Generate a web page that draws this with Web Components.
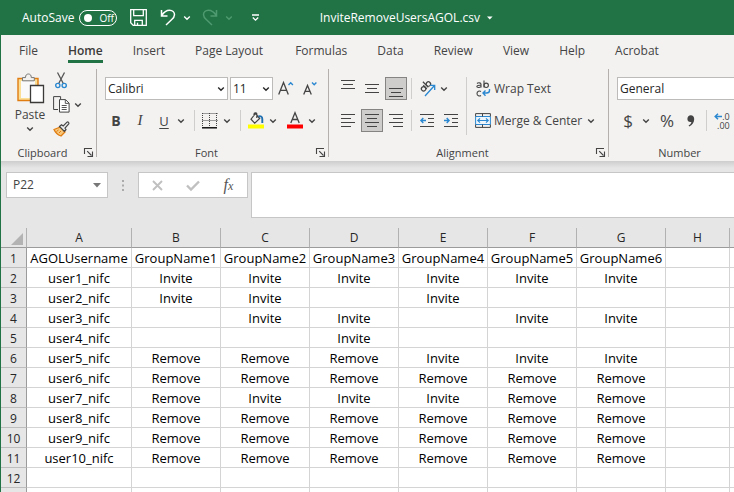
<!DOCTYPE html>
<html lang="en">
<head>
<meta charset="utf-8">
<title>InviteRemoveUsersAGOL.csv</title>
<style>
  html, body { height: 100%; }
  body {
    margin: 0; overflow: hidden; background: #e6e6e6; color: #444;
    font: 12px/16px "Open Sans", "Noto Sans", sans-serif;
  }
</style>
</head>
<body>
<xl-app></xl-app>
<script>
const ICONS = {
  chevron: [8, 6, '<path d="M1.2 1.5 4 4.2 6.8 1.5" stroke-width="1.4"/>'],
  caret: [8, 5, '<path d="M0 0h8L4 4.5z" fill="currentColor" stroke="none"/>'],
  smallcaret: [6, 4, '<path d="M0 .5h5.6L2.8 3.5z" fill="currentColor" stroke="none"/>'],
  save: [17, 17, '<path d="M.7.7h15.6v15.6H3.2L.7 13.8zM3.7.7v6h9.6v-6M4.7 16.3v-5h7.600v5M7.500 16.300v-2.500" stroke-width="1.3"/>'],
  undo: [16, 17, '<path d="M1.500 1v6h6M1.800 6.500C4 3 6.500 1.300 9.500 1.300c3 0 5 2 5 4.500 0 2-1 3.300-3 5L6 16" stroke-width="1.5"/>'],
  redo: [16, 17, '<path d="M14.500 1v6h-6M14.200 6.500C12 3 9.500 1.300 6.500 1.300c-3 0-5 2-5 4.500 0 2 1 3.300 3 5L10 16" stroke-width="1.5"/>'],
  customize: [9, 8, '<path d="M1 1h7M1.800 3.500 4.500 6.200 7.200 3.500" stroke-width="1.3"/>'],
  paste: [29, 31, '<path d="M2 5.500h20v22H2z" fill="#fbdf97" stroke="#e07c10" stroke-width="1.400"/><path d="M5 8h14v17H5z" fill="#fafafa" stroke="none"/><path d="M6.500 7.800V4.600h3C9.500 2 10.800 1 12.400 1s2.900 1 2.900 3.600h3v3.200z" fill="#f3f2f1" stroke="#777"/><path d="M14.500 12.500h13v17h-13z" fill="#fff" stroke="#3b3a39" stroke-width="1.300"/>'],
  cut: [12, 17, '<path d="M2.500.5 8.300 11.500M9.500.5 3.700 11.500" stroke="#555" stroke-width="1.300"/><circle cx="2.800" cy="13.500" r="2.100" stroke="#2b88d0" stroke-width="1.400"/><circle cx="9.200" cy="13.500" r="2.100" stroke="#2b88d0" stroke-width="1.400"/>'],
  copy: [17, 17, '<path d="M5 13.500H.6V.6h7v2.500" /><path d="M6.500 3.600h6l3.600 3.600v8.900H6.500z" fill="#fff"/><path d="M12.300 3.800v3.600h3.600M8.700 9.500h5M8.700 11.500h5M8.700 13.500h5" stroke-width=".9"/>'],
  brush: [17, 16, '<path d="M1 8.500 7.500 6l4.500 5-4 4C5 14 2.500 12 1 8.500z" fill="#f8c67a" stroke="#e07c10" stroke-width="1.300"/><path d="m6 12 2-2M3.500 10.500 5.500 9" stroke="#e07c10"/><path d="m6.500 5.500 2-1.700L10.200 5 14 1.200c1-.8 2.500.6 1.700 1.700L12 7l1 1.700-1.600 1.700z" fill="#eee" stroke="#444" stroke-width="1.200"/>'],
  launcher: [9, 9, '<path d="M.5 6V.5H8M3.200 3.200 7.500 7.500M8.500 3.500v5h-5" stroke-width="1.100"/>'],
  border: [16, 16, '<path d="M.5.5h15M.5 7.500h15M.5 0v14M7.500 0v14M14.500 0v14" stroke-dasharray="1 1"/><path d="M0 14.800h15" stroke="#000" stroke-width="1.400"/>'],
  fill: [17, 17, '<path d="M7.500 1.500 3 7.200l3.700 4 5-4.700zM6 4V2.200C6 .8 8.700.2 8.800 2v4" stroke-width="1.200"/><path d="M10.500 4.500c2-.8 3.800 0 3.800 2.500v4" stroke="#1e6fb0" stroke-width="1.900"/><path d="M0 12.500h16v4H0z" fill="#ff0" stroke="none"/>'],
  fontcolor: [16, 17, '<path d="M3.800 11 8 .8 12.200 11M5.300 7.500h5.400" stroke-width="1.300"/><path d="M0 12.500h16v4H0z" fill="red" stroke="none"/>'],
  grow: [16, 15, '<path d="M.7 13.500 5.500 1.500l4.800 12M2.300 9.300h6.400" stroke-width="1.300"/><path d="m10.500 4 2.200-2.200L14.900 4" stroke="#2b88d0" stroke-width="1.400"/>'],
  shrink: [15, 15, '<path d="M.7 13.500 4.500 4.500l3.800 9M2 10.300h5" stroke-width="1.300"/><path d="m9 1.500 2.200 2.200 2.200-2.200" stroke="#2b88d0" stroke-width="1.400"/>'],
  top: [14, 17, '<path d="M0 .5h14M2 4.500h10M0 8.500h14"/>'],
  middle: [14, 17, '<path d="M0 4.500h14M2 8.500h10M0 12.500h14"/>'],
  bottom: [14, 17, '<path d="M0 8.500h14M2 12.500h10M0 16.500h14"/>'],
  left: [14, 13, '<path d="M0 .5h14M0 4.500h10M0 8.500h14M0 12.500h10"/>'],
  center: [14, 13, '<path d="M0 .5h14M2 4.500h10M0 8.500h14M2 12.500h10"/>'],
  right: [14, 13, '<path d="M0 .5h14M4 4.500h10M0 8.500h14M4 12.500h10"/>'],
  outdent: [14, 13, '<path d="M0 .5h14M8 4.500h6M8 8.500h6M0 12.500h14"/><path d="M6 6.500H1M3.300 4 .9 6.500 3.300 9" stroke="#2b88d0" stroke-width="1.400"/>'],
  indent: [14, 13, '<path d="M0 .5h14M8 4.500h6M8 8.500h6M0 12.500h14"/><path d="M0 6.500h5M2.700 4l2.400 2.500L2.700 9" stroke="#2b88d0" stroke-width="1.400"/>'],
  orient: [17, 17, '<g transform="rotate(-45 6 6)" stroke-width="1.200"><circle cx="3" cy="7" r="2.200"/><path d="M5.300 4.300v5"/><path d="M7.500 1.500v7.700"/><circle cx="9.800" cy="7" r="2.200"/></g><path d="M6 16 15.500 5.500M11 5.300h4.700V10" stroke="#2b88d0" stroke-width="1.300"/>'],
  wrap: [15, 17, '<g stroke-width="1.100"><path d="M1 3.500c1-1 4-1 4 .7v3.300M5 5.300C2.500 5 .8 5.600.8 6.600S3.800 8 5 6.500M8 .5v7"/><ellipse cx="10.200" cy="5.300" rx="2.200" ry="2.200"/><path d="M5 11.500c-1.500-1-4-.5-4 2s2.500 3 4 2"/></g><path d="M13.500 9v1.500c0 2-1 2.500-3 2.500H7M9.500 10.500 7 13l2.500 2.700" stroke="#2b88d0" stroke-width="1.400"/>'],
  merge: [16, 15, '<path d="M.6 3.500h14.800v8H.6z" stroke="#2b88d0" fill="#eef6fc"/><path d="M.6 3.500V.6h14.800v2.900M.6 11.500v2.900h14.800v-2.900M7.500.6v2.900M7.500 11.500v2.900"/><path d="M3 7.500h10M5 5.300 2.800 7.500 5 9.700M11 5.300l2.200 2.200L11 9.700" stroke="#2b88d0" stroke-width="1.200"/>'],
  comma: [8, 12, '<path d="M3.800.3c2 0 3.400 1.400 3.400 3.700 0 3.600-2 6-5 7.400l-.6-.9c1.600-1 2.600-2.300 2.800-3.600C2 7.400.4 6 .4 3.900.4 1.800 1.900.3 3.800.3z" fill="currentColor" stroke="none"/>'],
  arrow: [8, 7, '<path d="M8 3.500H1.500M4 .8 1.200 3.500 4 6.200" stroke="#2b88d0" stroke-width="1.500"/>'],
  cancel: [11, 11, '<path d="m1 1 9 9M10 1l-9 9" stroke-width="1.900"/>'],
  enter: [14, 11, '<path d="m1 5.500 4 4 8-8" stroke-width="2.400"/>'],
  dots: [2, 11, '<path d="M0 0h2v2H0zM0 4.500h2v2H0zM0 9h2v2H0z" fill="currentColor" stroke="none"/>'],
  corner: [12, 12, '<path d="M12 0v12H0z" fill="#b3b3b3" stroke="none"/>']
};

const define = (name, html, setup) => customElements.define(name, class extends HTMLElement {
  connectedCallback() {
    if (this.shadowRoot) return;
    const template = document.createElement('template');
    template.innerHTML = html;
    this.attachShadow({ mode: 'open' }).append(template.content.cloneNode(true));
    if (setup) setup(this, this.shadowRoot);
  }
});

define('xl-icon', `<style>:host{display:inline-flex;flex:none} svg{display:block;overflow:visible}</style>`, (host, root) => {
  const [w, h, body] = ICONS[host.getAttribute('name')];
  root.innerHTML += `<svg width="${w}" height="${h}" viewBox="0 0 ${w} ${h}" fill="none" stroke="currentColor" aria-hidden="true">${body}</svg>`;
});

define('xl-button', `<style>
  :host{display:inline-flex;flex:none;width:22px;height:23px}
  :host([drop]){width:12px}
  :host([wide]){width:auto}
  button{flex:1;display:flex;align-items:center;justify-content:center;gap:3px;min-width:0;padding:0;border:1px solid transparent;background:none;color:inherit;font:inherit;white-space:nowrap}
  :host([pressed]) button{background:#cfcdcb;border-color:#868482}
</style><button type="button"><slot></slot></button>`, (host, root) => {
  const b = root.querySelector('button');
  b.setAttribute('aria-label', host.getAttribute('label'));
  if (host.hasAttribute('pressed')) b.setAttribute('aria-pressed', 'true');
});

define('xl-sep', `<style>:host{display:block;flex:none;width:1px;height:21px;background:#d0cecc}</style>`);

define('xl-select', `<style>
  :host{display:grid;height:23px;box-sizing:border-box;border:1px solid #bdbbb9;background:#fff;color:#262626}
  select,xl-icon{grid-area:1/1}
  select{appearance:none;border:0;background:none;width:100%;height:21px;padding:0 0 0 2px;font:inherit;color:inherit;min-width:0}
  xl-icon{justify-self:end;align-self:center;margin-right:2px;pointer-events:none}
</style><select><option></option></select><xl-icon name="chevron"></xl-icon>`, (host, root) => {
  root.querySelector('option').textContent = host.getAttribute('value');
  root.querySelector('select').setAttribute('aria-label', host.getAttribute('label'));
});

define('xl-titlebar', `<style>
  :host{display:grid;grid-template-columns:13fr auto 10fr;align-items:center;height:35px;padding:0 12px 0 21px;background:#217346;color:#fff}
  .quick{display:flex;align-items:center}
  .toggle{display:flex;align-items:center;gap:5px}
  .switch{display:flex;align-items:center;gap:7px;box-sizing:border-box;width:38px;height:16px;padding:0 5px 0 4px;border:1px solid #fff;border-radius:8px;background:none;color:inherit;font:10px/14px "Open Sans",sans-serif}
  .switch::before{content:"";flex:none;width:8px;height:8px;border-radius:50%;background:#fff}
  .save{margin-left:10px}
  .undo{margin-left:8px}
  .redo{margin-left:6px;color:#4f9a70}
  .list{margin-left:2px}
  .more{margin-left:9px}
  h1{display:flex;align-items:center;gap:7px;margin:0;font:inherit}
</style>
<div class="quick">
  <div class="toggle"><span id="as">AutoSave</span><button class="switch" type="button" role="switch" aria-checked="false" aria-labelledby="as">Off</button></div>
  <xl-button class="save" label="Save"><xl-icon name="save"></xl-icon></xl-button>
  <xl-button class="undo" label="Undo"><xl-icon name="undo"></xl-icon></xl-button>
  <xl-button class="list" drop label="Undo list"><xl-icon name="chevron"></xl-icon></xl-button>
  <xl-button class="redo" label="Redo"><xl-icon name="redo"></xl-icon></xl-button>
  <xl-button class="redo list" style="margin-left:2px" drop label="Redo list"><xl-icon name="chevron"></xl-icon></xl-button>
  <xl-button class="more" label="Customize toolbar"><xl-icon name="customize"></xl-icon></xl-button>
</div>
<h1>InviteRemoveUsersAGOL.csv <xl-icon name="smallcaret"></xl-icon></h1>`);

define('xl-tabs', `<style>
  :host{display:block;height:31px;background:#f3f2f1}
  nav{display:flex;gap:30px;padding-left:18px;white-space:nowrap}
  a{padding:8px 0 1px;color:#444;text-decoration:none}
  a[aria-current]{font-weight:600;color:#3b3a39;border-bottom:3px solid #217346}
  a[aria-current]+a+a+a{margin-left:2px}
</style><nav></nav>`, (host, root) => {
  root.querySelector('nav').innerHTML = ['File','Home','Insert','Page Layout','Formulas','Data','Review','View','Help','Acrobat']
    .map(t => `<a href="#"${t === 'Home' ? ' aria-current="page"' : ''}>${t}</a>`).join('');
});

define('xl-group', `<style>
  :host{display:flex;flex:none;flex-direction:column;height:88px;padding-top:8px;box-sizing:border-box;border-right:1px solid #b3b0ad}
  .body{flex:1;min-height:0}
  footer{display:flex;align-items:center;height:9px;padding-right:3px;font-size:11px;line-height:9px;color:#444}
  footer span{flex:1;text-align:center}
</style><div class="body"><slot></slot></div><footer><span></span></footer>`, (host, root) => {
  root.querySelector('span').textContent = host.getAttribute('label');
  if (!host.hasAttribute('plain')) root.querySelector('footer').insertAdjacentHTML('beforeend', '<xl-icon name="launcher"></xl-icon>');
});

define('xl-ribbon', `<style>
  :host{display:flex;height:95px;padding-top:3px;box-sizing:border-box;background:#f3f2f1;overflow:hidden}
  .clip{width:96px}
  .font{width:232px}
  .align{width:280px}
  .num{width:144px;border:0}
  .row{display:flex;align-items:center;height:23px;margin-bottom:9px}
  .font .row,.num .row{padding-left:8px}
  .gap2{gap:2px}
  .font xl-button[drop]{margin:0 3px 0 -2px}
  .num xl-button[drop]{margin-left:-1px}
  .clipgrid{display:flex;gap:3px;padding-left:12px;margin-top:-4px}
  .paste{display:flex;flex-direction:column;align-items:center;width:34px;padding:0;border:0;background:none;color:inherit;font:inherit;gap:3px}
  .stack{display:flex;flex-direction:column;gap:1px;margin-top:-4px}
  .stack div{display:flex}
  .cols{display:flex;padding-left:8px}
  .tall{height:58px;margin:0 7px 0 4px}
  .wrap{margin-left:1px}
  b{font-size:14px}
  i{font:italic 15px "Liberation Serif",serif}
  u{font-size:13px;text-underline-offset:2px}
  .sign{font-size:17px}
  .digits{display:grid;font-size:9px;line-height:9px;justify-items:end}
  .digits span{display:flex;align-items:center;height:9px}
</style>
<xl-group class="clip" label="Clipboard"><div class="clipgrid">
  <button class="paste" type="button"><xl-icon name="paste"></xl-icon>Paste<xl-icon name="chevron"></xl-icon></button>
  <div class="stack">
    <div><xl-button label="Cut"><xl-icon name="cut"></xl-icon></xl-button></div>
    <div><xl-button label="Copy"><xl-icon name="copy"></xl-icon></xl-button><xl-button drop label="Copy options"><xl-icon name="chevron"></xl-icon></xl-button></div>
    <div><xl-button label="Format Painter"><xl-icon name="brush"></xl-icon></xl-button></div>
  </div></div>
</xl-group>
<xl-group class="font" label="Font">
  <div class="row gap2"><xl-select style="width:123px" value="Calibri" label="Font"></xl-select><xl-select style="width:43px" value="11" label="Font size"></xl-select>
    <xl-button label="Increase font size"><xl-icon name="grow"></xl-icon></xl-button><xl-button label="Decrease font size"><xl-icon name="shrink"></xl-icon></xl-button></div>
  <div class="row gap2"><xl-button label="Bold"><b>B</b></xl-button><xl-button label="Italic"><i>I</i></xl-button><xl-button label="Underline"><u>U</u></xl-button><xl-button drop label="Underline options"><xl-icon name="chevron"></xl-icon></xl-button>
    <xl-sep style="margin:0 2px"></xl-sep><xl-button label="Borders"><xl-icon name="border"></xl-icon></xl-button><xl-button drop label="Border options"><xl-icon name="chevron"></xl-icon></xl-button>
    <xl-sep style="margin:0 2px"></xl-sep><xl-button label="Fill color"><xl-icon name="fill"></xl-icon></xl-button><xl-button drop label="Fill color options"><xl-icon name="chevron"></xl-icon></xl-button><xl-button label="Font color"><xl-icon name="fontcolor"></xl-icon></xl-button><xl-button drop label="Font color options"><xl-icon name="chevron"></xl-icon></xl-button></div>
</xl-group>
<xl-group class="align" label="Alignment"><div class="cols">
  <div>
    <div class="row gap2"><xl-button label="Top Align"><xl-icon name="top"></xl-icon></xl-button><xl-button label="Middle Align"><xl-icon name="middle"></xl-icon></xl-button><xl-button pressed label="Bottom Align"><xl-icon name="bottom"></xl-icon></xl-button><xl-sep style="margin:0 2px"></xl-sep><xl-button label="Orientation"><xl-icon name="orient"></xl-icon></xl-button><xl-button drop style="margin-left:-2px" label="Orientation options"><xl-icon name="chevron"></xl-icon></xl-button></div>
    <div class="row gap2"><xl-button label="Align Left"><xl-icon name="left"></xl-icon></xl-button><xl-button pressed label="Center"><xl-icon name="center"></xl-icon></xl-button><xl-button label="Align Right"><xl-icon name="right"></xl-icon></xl-button><xl-sep style="margin:0 2px"></xl-sep><xl-button label="Decrease Indent"><xl-icon name="outdent"></xl-icon></xl-button><xl-button label="Increase Indent"><xl-icon name="indent"></xl-icon></xl-button></div>
  </div>
  <xl-sep class="tall"></xl-sep>
  <div>
    <div class="row"><xl-button class="wrap" wide label="Wrap Text"><xl-icon name="wrap"></xl-icon>Wrap Text</xl-button></div>
    <div class="row gap2"><xl-button wide label="Merge &amp; Center"><xl-icon name="merge"></xl-icon>Merge &amp; Center</xl-button><xl-button drop label="Merge options"><xl-icon name="chevron"></xl-icon></xl-button></div>
  </div></div>
</xl-group>
<xl-group class="num" label="Number" plain>
  <div class="row"><xl-select style="width:136px" value="General" label="Number format"></xl-select></div>
  <div class="row gap2"><xl-button label="Accounting format"><span class="sign">$</span></xl-button><xl-button drop label="Accounting options"><xl-icon name="chevron"></xl-icon></xl-button><xl-button style="margin-left:2px" label="Percent Style"><span class="sign">%</span></xl-button><xl-button label="Comma Style"><xl-icon name="comma"></xl-icon></xl-button><xl-sep style="margin:0 2px"></xl-sep><xl-button label="Increase Decimal"><span class="digits"><span><xl-icon name="arrow"></xl-icon>.0</span><span>.00</span></span></xl-button></div>
</xl-group>`);

define('xl-formula-bar', `<style>
  :host{display:flex;align-items:flex-start;height:67px;padding:11px 0 0 5px;box-sizing:border-box;background:linear-gradient(#cdcdcd,#e6e6e6 7px)}
  .box{display:flex;align-items:center;box-sizing:border-box;height:26px;border:1px solid #c6c6c6;background:#fff}
  .name{width:102px;padding:0 6px}
  input{min-width:0;flex:1;border:0;padding:0;background:none;font:inherit;color:#444}
  .name xl-icon{color:#777}
  .dots{margin:8px 14px 0;color:#aaa}
  .tools{width:110px;justify-content:space-around;padding:0 1px;color:#c0c0c0}
  .fx{color:#555;font:italic 16px "Liberation Serif",serif}
  .fx small{font-size:12px}
  .formula{flex:1;min-width:0;height:46px;margin-left:3px;border-right:0}
</style>
<div class="box name"><input aria-label="Name Box" value="P22"><xl-icon name="caret"></xl-icon></div>
<xl-icon class="dots" name="dots"></xl-icon>
<div class="box tools"><xl-button label="Cancel"><xl-icon name="cancel"></xl-icon></xl-button><xl-button label="Enter"><xl-icon name="enter"></xl-icon></xl-button><xl-button label="Insert Function"><span class="fx">f<small>x</small></span></xl-button></div>
<div class="box formula"><input aria-label="Formula bar"></div>`);

define('xl-sheet', `<style>
  :host{display:block;flex:1;min-height:0;overflow:hidden;background:#fff;font-size:13px;line-height:19px;color:#000}
  table{table-layout:fixed;border-collapse:separate;border-spacing:0;width:793px}
  th,td{height:19px;padding:0;text-align:center;font-weight:400;white-space:nowrap;border:solid #d4d4d4;border-width:0 1px 1px 0}
  th{background:#e6e6e6;color:#262626;font-size:12px}
  tbody th,tbody td{box-sizing:border-box;height:20px;padding-top:2px;line-height:17px}
  thead th{border-color:#9b9b9b;border-right-color:#b1b1b1}
  tbody th{border-right-color:#9b9b9b;border-bottom-color:#bdbdbd}
  thead th:first-child xl-icon{display:flex;justify-content:flex-end;padding:3px 3px 0 0}
  .n{width:26px}.a{width:105px}.g{width:89px}.h{width:64px}
</style><table><colgroup><col class="n"><col class="a"><col class="g" span="6"><col class="h" span="2"></colgroup><thead></thead><tbody></tbody></table>`, (host, root) => {
  const I = 'Invite', R = 'Remove', _ = '';
  const rows = [
    ['AGOLUsername', ...[1,2,3,4,5,6].map(n => 'GroupName' + n)],
    ['user1_nifc', I, I, I, I, I, I], ['user2_nifc', I, I, _, I, _, _],
    ['user3_nifc', _, I, I, _, I, I], ['user4_nifc', _, _, I, _, _, _],
    ['user5_nifc', R, R, R, I, I, I], ['user6_nifc', R, R, R, R, R, R],
    ['user7_nifc', R, I, I, I, R, R], ['user8_nifc', R, R, R, R, R, R],
    ['user9_nifc', R, R, R, R, R, R], ['user10_nifc', R, R, R, R, R, R], [], []
  ];
  const cols = [...'ABCDEFGH', ''];
  root.querySelector('thead').innerHTML = '<tr><th><xl-icon name="corner"></xl-icon></th>' + cols.map(c => `<th scope="col">${c}</th>`).join('') + '</tr>';
  root.querySelector('tbody').innerHTML = rows.map((r, i) =>
    `<tr><th scope="row">${i < 12 ? i + 1 : ''}</th>${cols.map((_, c) => `<td>${r[c] || ''}</td>`).join('')}</tr>`).join('');
});

define('xl-app', `<style>
  :host{display:flex;flex-direction:column;height:100vh;box-sizing:border-box;border-left:1px solid #217346}
  xl-titlebar,xl-tabs,xl-ribbon,xl-formula-bar{flex:none}
</style><xl-titlebar></xl-titlebar><xl-tabs></xl-tabs><xl-ribbon></xl-ribbon><xl-formula-bar></xl-formula-bar><xl-sheet></xl-sheet>`);
</script>
</body>
</html>
